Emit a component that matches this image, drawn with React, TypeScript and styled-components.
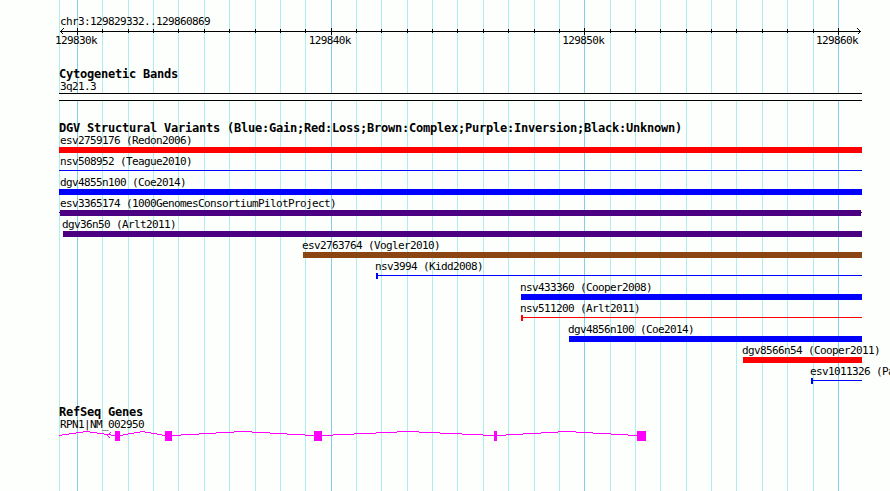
import styled, { createGlobalStyle } from "styled-components";

const LEFT = 59;
const RIGHT = 862;

const MAJOR = [77, 331, 584, 838];
const MINOR = [
  102, 128, 153, 178, 204, 229, 255, 280, 305, 356, 381, 407, 432, 457, 483,
  508, 534, 559, 610, 635, 660, 686, 711, 736, 762, 787, 813,
];

const RED = "#ff0000";
const BLUE = "#0000ff";
const INDIGO = "#4b0082";
const BROWN = "#8b4513";

type Shape = "bar" | "line" | "capped" | "nubs";

interface Variant {
  name: string;
  start: number;
  color: string;
  shape: Shape;
}

const variants: Variant[] = [
  { name: "esv2759176 (Redon2006)", start: 59, color: RED, shape: "bar" },
  { name: "nsv508952 (Teague2010)", start: 59, color: BLUE, shape: "line" },
  { name: "dgv4855n100 (Coe2014)", start: 59, color: BLUE, shape: "bar" },
  {
    name: "esv3365174 (1000GenomesConsortiumPilotProject)",
    start: 59,
    color: INDIGO,
    shape: "nubs",
  },
  { name: "dgv36n50 (Arlt2011)", start: 63, color: INDIGO, shape: "bar" },
  { name: "esv2763764 (Vogler2010)", start: 303, color: BROWN, shape: "bar" },
  { name: "nsv3994 (Kidd2008)", start: 376, color: BLUE, shape: "capped" },
  { name: "nsv433360 (Cooper2008)", start: 521, color: BLUE, shape: "bar" },
  { name: "nsv511200 (Arlt2011)", start: 521, color: RED, shape: "capped" },
  { name: "dgv4856n100 (Coe2014)", start: 569, color: BLUE, shape: "bar" },
  { name: "dgv8566n54 (Cooper2011)", start: 743, color: RED, shape: "bar" },
  { name: "esv1011326 (Pa", start: 811, color: BLUE, shape: "capped" },
];

// [start, end] of every exon
const exons = [
  [115, 120],
  [165, 172],
  [314, 322],
  [494, 497],
  [637, 646],
];

// an intron rises 4px to its middle and falls back, one whole pixel per step
const intronSteps = (from: number, to: number) => {
  const step = (to - from) / 8;
  const edges = [0, 0.5, 1.5, 2.5, 3.5, 4.5, 5.5, 6.5, 7.5, 8].map((n) =>
    Math.round(from + n * step)
  );
  return [4, 3, 2, 1, 0, 1, 2, 3, 4].map((y, i) => ({
    x: edges[i],
    y,
    width: edges[i + 1] - edges[i],
  }));
};

const GridLines = () => (
  <S.Grid width={890} height={491} shapeRendering="crispEdges">
    {[LEFT, ...MINOR].map((x) => (
      <rect key={x} x={x} y={0} width={1} height={491} fill="#afeeee" />
    ))}
    {MAJOR.map((x) => (
      <rect key={x} x={x} y={0} width={1} height={491} fill="#87ceeb" />
    ))}
  </S.Grid>
);

const Ruler = () => (
  <S.Ruler>
    <S.Label $start={60}>chr3:129829332..129860869</S.Label>
    <S.Scale width={890} height={9} shapeRendering="crispEdges">
      <rect x={60} y={5} width={801} height={1} />
      {MINOR.map((x) => (
        <rect key={x} x={x} y={3} width={1} height={4} />
      ))}
      {MAJOR.map((x) => (
        <rect key={x} x={x} y={2} width={1} height={7} />
      ))}
      <path
        d="M63.5 2.5L60.5 5.5L63.5 8.5M857.5 2.5L860.5 5.5L857.5 8.5"
        fill="none"
        stroke="#000"
      />
    </S.Scale>
    <S.Ticks>
      <span>129830k</span>
      <span>129840k</span>
      <span>129850k</span>
      <span>129860k</span>
    </S.Ticks>
  </S.Ruler>
);

const VariantRow = ({ variant }: { variant: Variant }) => {
  const { name, start, color, shape } = variant;
  return (
    <S.Row>
      <S.Label $start={start === LEFT ? LEFT + 1 : start - 1}>{name}</S.Label>
      <S.Feature $start={start} $color={color} $shape={shape} />
    </S.Row>
  );
};

const Gene = () => {
  // the first intron runs on past the left edge
  const introns = exons.map(([start], i) => [i ? exons[i - 1][1] : 58, start]);
  return (
    <S.Gene width={890} height={10} shapeRendering="crispEdges">
      {introns.map(([from, to]) =>
        intronSteps(from, to).map(({ x, y, width }) => {
          const left = Math.max(x, LEFT);
          return (
            <rect
              key={x}
              x={left}
              y={y}
              width={x + width - left}
              height={1}
            />
          );
        })
      )}
      <path d="M110.5 1.5L107.5 4.5L110.5 7.5" />
      {exons.map(([from, to]) => (
        <rect key={from} x={from} y={0} width={to - from} height={10} />
      ))}
    </S.Gene>
  );
};

const App = () => {
  return (
    <>
      <GlobalStyle />
      <S.Container>
        <GridLines />
        <S.Content>
          <Ruler />
          <S.Track>
            <S.Title>Cytogenetic Bands</S.Title>
            <S.Label $start={60}>3q21.3</S.Label>
            <S.Band />
          </S.Track>
          <S.Track>
            <S.Title>
              DGV Structural Variants
              (Blue:Gain;Red:Loss;Brown:Complex;Purple:Inversion;Black:Unknown)
            </S.Title>
            {variants.map((variant) => (
              <VariantRow key={variant.name} variant={variant} />
            ))}
          </S.Track>
          <S.Track $gap={18}>
            <S.Title>RefSeq Genes</S.Title>
            <S.Label $start={60}>RPN1|NM_002950</S.Label>
            <Gene />
          </S.Track>
        </S.Content>
      </S.Container>
    </>
  );
};

export default App;

const GlobalStyle = createGlobalStyle`
  body {
    margin: 0;
    background: #fdfffc;
    overflow: hidden;
  }
`;

const S = {
  Container: styled.main`
    position: relative;
    width: 890px;
    height: 491px;
    overflow: hidden;
    background: #fdfffc;
    color: #000;
    font: 11px/12px "DejaVu Sans Mono", monospace;
    letter-spacing: -0.622px;
    white-space: nowrap;
  `,
  Grid: styled.svg`
    position: absolute;
    inset: 0;
  `,
  Content: styled.div`
    position: relative;
    display: flex;
    flex-direction: column;
    padding-top: 16px;
  `,
  Ruler: styled.header`
    display: flex;
    flex-direction: column;
  `,
  Scale: styled.svg`
    display: block;
    margin-top: -2px;
  `,
  Ticks: styled.div`
    display: flex;
    justify-content: space-between;
    width: 803px;
    margin-left: 55px;
  `,
  Track: styled.section<{ $gap?: number }>`
    display: flex;
    flex-direction: column;
    margin-top: ${({ $gap }) => $gap ?? 20}px;
  `,
  Title: styled.h2`
    margin: 0 0 0 ${LEFT}px;
    height: 14px;
    font-size: 12px;
    line-height: 14px;
    font-weight: 700;
    letter-spacing: -0.225px;
  `,
  Label: styled.div<{ $start: number }>`
    height: 12px;
    margin-left: ${({ $start }) => $start}px;
  `,
  Band: styled.div`
    box-sizing: border-box;
    width: ${RIGHT - LEFT}px;
    height: 8px;
    margin-left: ${LEFT}px;
    border: solid #000;
    border-width: 1px 0;
    background: #fdfffc;
  `,
  Row: styled.div`
    display: flex;
    flex-direction: column;
    height: 21px;
  `,
  Feature: styled.div<{ $start: number; $color: string; $shape: Shape }>`
    box-sizing: border-box;
    width: ${({ $start }) => RIGHT - $start}px;
    height: 6px;
    margin-left: ${({ $start }) => $start}px;
    background-color: ${({ $color, $shape }) =>
      $shape === "bar" ? $color : "transparent"};
    background-repeat: no-repeat;
    background-image: ${({ $color, $shape }) =>
      $shape === "bar"
        ? "none"
        : `linear-gradient(${$color}, ${$color}), linear-gradient(${$color}, ${$color})`};
    background-position: 0 2px, ${({ $shape }) => ($shape === "nubs" ? "1px" : "0")} 0;
    background-size: 100% 1px,
      ${({ $shape }) =>
        $shape === "nubs"
          ? "calc(100% - 2px) 100%"
          : $shape === "capped"
          ? "2px 100%"
          : "0 0"};
  `,
  Gene: styled.svg`
    display: block;

    path {
      fill: none;
      stroke: #ff00ff;
    }

    rect {
      fill: #ff00ff;
    }
  `,
};
